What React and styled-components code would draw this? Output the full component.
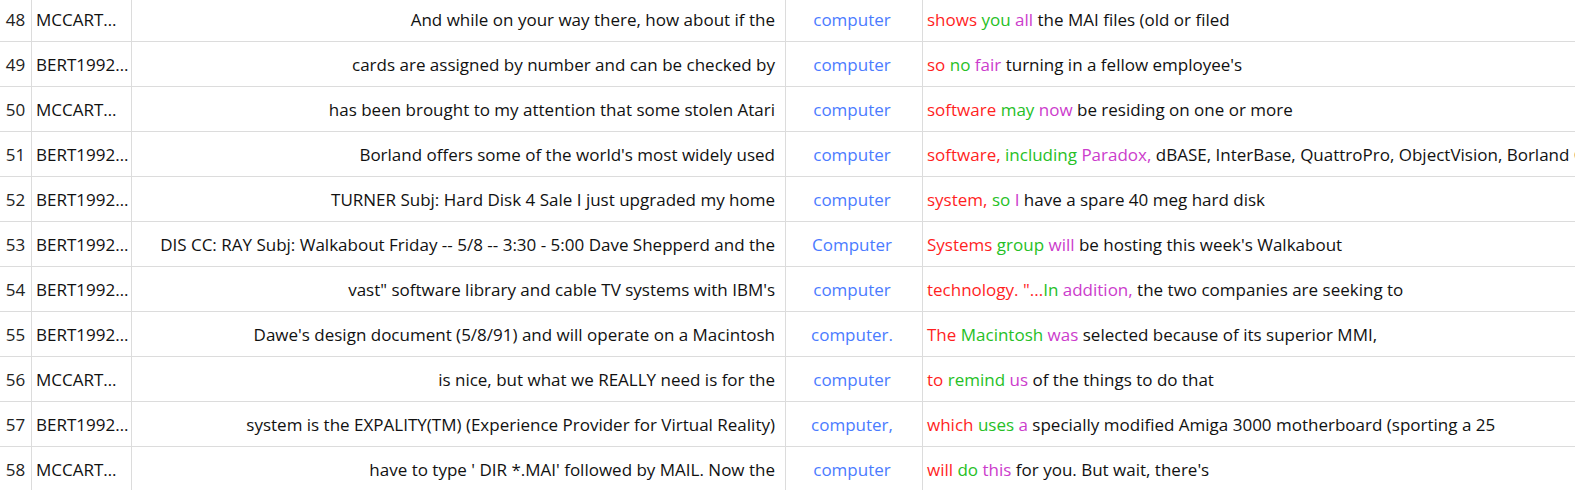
import React from 'react'
import styled, { createGlobalStyle } from 'styled-components'

const GlobalStyle = createGlobalStyle`
  body {
    margin: 0;
    overflow: hidden;
    background: #fff;
    font-family: "Open Sans", "Noto Sans", sans-serif;
    font-size: 17px;
    color: #111;
  }
`

const Table = styled.div`
  margin-top: -3px;
  width: 100%;
`

const Row = styled.div`
  display: grid;
  grid-template-columns: 32px 100px 654px 137px 1fr;
  height: 45px;
  box-sizing: border-box;
  border-bottom: 1px solid #dcdcdc;
`

const Cell = styled.div`
  display: flex;
  align-items: center;
  min-width: 0;
  overflow: hidden;
  white-space: nowrap;
  border-right: 1px solid #dcdcdc;
  padding: 0 ${p => p.$pad || 4}px;
  justify-content: ${p => p.$align || 'flex-start'};
  &:last-child {
    border-right: none;
  }
`

const Num = styled(Cell)`
  justify-content: center;
  padding: 0;
  color: #222;
`

const SourceCell = styled(Cell)`
  padding: 0 2px 0 4px;
`

const Source = styled.span`
  overflow: hidden;
  text-overflow: ellipsis;
`

const Keyword = styled.span`
  color: #4b7bff;
  margin-right: 4px;
`

const Hit = styled.span`
  color: ${p => p.$tone};
`

const tones = ['#ff1f1f', '#26c026', '#cc3ccc']

const rows = [
  { n: 48, src: 'MCCARTHY.TXT', left: 'And while on your way there, how about if the', kw: 'computer', hits: ['shows ', 'you ', 'all'], rest: ' the MAI files (old or filed' },
  { n: 49, src: 'BERT1992.TXT', left: 'cards are assigned by number and can be checked by', kw: 'computer', hits: ['so ', 'no ', 'fair'], rest: " turning in a fellow employee's" },
  { n: 50, src: 'MCCARTHY.TXT', left: 'has been brought to my attention that some stolen Atari', kw: 'computer', hits: ['software ', 'may ', 'now'], rest: ' be residing on one or more' },
  { n: 51, src: 'BERT1992.TXT', left: "Borland offers some of the world's most widely used", kw: 'computer', hits: ['software, ', 'including ', 'Paradox,'], rest: ' dBASE, InterBase, QuattroPro, ObjectVision, Borland C++ and Turbo Pascal' },
  { n: 52, src: 'BERT1992.TXT', left: 'TURNER Subj: Hard Disk 4 Sale I just upgraded my home', kw: 'computer', hits: ['system, ', 'so ', 'I'], rest: ' have a spare 40 meg hard disk' },
  { n: 53, src: 'BERT1992.TXT', left: 'DIS CC: RAY Subj: Walkabout Friday -- 5/8 -- 3:30 - 5:00 Dave Shepperd and the', kw: 'Computer', hits: ['Systems ', 'group ', 'will'], rest: " be hosting this week's Walkabout" },
  { n: 54, src: 'BERT1992.TXT', left: "vast\" software library and cable TV systems with IBM's", kw: 'computer', hits: ['technology. "...', 'In ', 'addition,'], rest: ' the two companies are seeking to' },
  { n: 55, src: 'BERT1992.TXT', left: "Dawe's design document (5/8/91) and will operate on a Macintosh", kw: 'computer.', hits: ['The ', 'Macintosh ', 'was'], rest: ' selected because of its superior MMI,' },
  { n: 56, src: 'MCCARTHY.TXT', left: 'is nice, but what we REALLY need is for the', kw: 'computer', hits: ['to ', 'remind ', 'us'], rest: ' of the things to do that' },
  { n: 57, src: 'BERT1992.TXT', left: 'system is the EXPALITY(TM) (Experience Provider for Virtual Reality)', kw: 'computer,', hits: ['which ', 'uses ', 'a'], rest: ' specially modified Amiga 3000 motherboard (sporting a 25' },
  { n: 58, src: 'MCCARTHY.TXT', left: "have to type ' DIR *.MAI' followed by MAIL. Now the", kw: 'computer', hits: ['will ', 'do ', 'this'], rest: " for you. But wait, there's" },
]

export default function App() {
  return (
    <>
      <GlobalStyle />
      <Table>
        {rows.map(r => (
          <Row key={r.n}>
            <Num>{r.n}</Num>
            <SourceCell><Source>{r.src}</Source></SourceCell>
            <Cell $pad={10} $align="flex-end">{r.left}</Cell>
            <Cell $align="center"><Keyword>{r.kw}</Keyword></Cell>
            <Cell>
              <span>
                {r.hits.map((h, i) => (
                  <Hit key={i} $tone={tones[i]}>{h}</Hit>
                ))}
                {r.rest}
              </span>
            </Cell>
          </Row>
        ))}
      </Table>
    </>
  )
}
